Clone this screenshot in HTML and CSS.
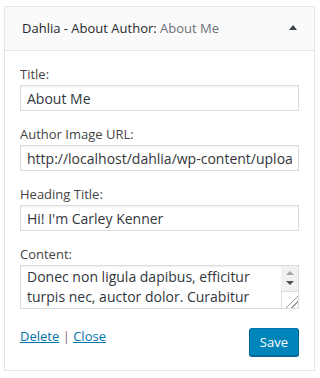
FILE: index.html
```html
<!DOCTYPE html>
<html lang="en">
<head>
    <meta charset="UTF-8">
    <meta name="viewport" content="width=device-width, initial-scale=1.0">
    <title>Widget - About Author</title>
    <link rel="stylesheet" href="styles.css">
</head>
<body>
    <!-- Widget box -->
    <div class="widget">
        <div class="widget-top">
            <h3 class="widget-title">Dahlia - About Author: <span class="in-title">About Me</span></h3>
            <span class="widget-toggle"></span>
        </div>

        <!-- Widget form -->
        <form class="widget-inside">
            <div class="field">
                <label for="title">Title:</label>
                <input id="title" type="text" value="About Me">
            </div>
            <div class="field">
                <label for="image">Author Image URL:</label>
                <input id="image" type="text" value="http://localhost/dahlia/wp-content/uploads/author.jpg">
            </div>
            <div class="field">
                <label for="heading">Heading Title:</label>
                <input id="heading" type="text" value="Hi! I'm Carley Kenner">
            </div>
            <div class="field">
                <label for="content">Content:</label>
                <div class="textarea-box">
                    <textarea id="content" rows="2">Donec non ligula dapibus, efficitur turpis nec, auctor dolor. Curabitur</textarea>
                    <div class="fake-scroll">
                        <span class="arrow up"></span>
                        <span class="arrow down"></span>
                        <span class="track"></span>
                        <span class="grip"></span>
                    </div>
                </div>
            </div>

            <div class="widget-actions">
                <div class="links">
                    <a href="#">Delete</a> | <a href="#">Close</a>
                </div>
                <button type="button" class="button-primary">Save</button>
            </div>
        </form>
    </div>
</body>
</html>
```

FILE: styles.css
```css
* {
    margin: 0;
    padding: 0;
    box-sizing: border-box;
}

body {
    padding: 6px 0 0 4px;
    background: #fff;
    font-family: 'Open Sans', 'Liberation Sans', sans-serif;
    font-size: 13px;
    color: #444;
}

.widget {
    width: 311px;
    border: 1px solid #e5e5e5;
    background: #fff;
    box-shadow: 0 1px 1px rgba(0, 0, 0, 0.04);
}

.widget-top {
    display: flex;
    justify-content: space-between;
    align-items: center;
    height: 44px;
    padding: 0 15px 2px 17px;
    background: #fafafa;
    border-bottom: 1px solid #e5e5e5;
}

.widget-title {
    font-size: 13px;
    font-weight: normal;
    color: #23282d;
}

.in-title {
    color: #6a7077;
}

.widget-toggle {
    width: 0;
    height: 0;
    margin-right: 2px;
    border-left: 4px solid transparent;
    border-right: 4px solid transparent;
    border-bottom: 5px solid #3c434a;
}

.widget-inside {
    padding: 13px 15px 14px;
}

.field {
    margin-bottom: 13px;
}

.field label {
    display: block;
    line-height: 20px;
    margin-bottom: 1px;
    color: #444;
}

.field input {
    display: block;
    width: 100%;
    height: 26px;
    padding: 0 6px;
    border: 1px solid #ddd;
    box-shadow: inset 0 1px 2px rgba(0, 0, 0, 0.07);
    font-family: inherit;
    font-size: 14px;
    color: #32373c;
    outline: none;
}

.textarea-box {
    display: flex;
    height: 44px;
    border: 1px solid #ddd;
    box-shadow: inset 0 1px 2px rgba(0, 0, 0, 0.07);
}

.textarea-box textarea {
    flex: 1;
    padding: 1px 6px;
    border: none;
    background: transparent;
    resize: none;
    overflow: hidden;
    font-family: inherit;
    font-size: 14px;
    line-height: 20px;
    color: #32373c;
    outline: none;
}

.fake-scroll {
    display: flex;
    flex-direction: column;
    align-items: center;
    width: 17px;
    background: #f1f1f1;
}

.arrow {
    width: 0;
    height: 0;
    border-left: 4px solid transparent;
    border-right: 4px solid transparent;
}

.arrow.up {
    margin-top: 5px;
    border-bottom: 4px solid #a3a3a3;
}

.arrow.down {
    margin-top: 6px;
    border-top: 4px solid #505050;
}

.track {
    flex: 1;
}

.grip {
    width: 17px;
    height: 17px;
    background: #fff linear-gradient(135deg, transparent 60%, #999 60%, #999 65%, transparent 65%, transparent 78%, #999 78%, #999 83%, transparent 83%);
    border-top: 1px solid #ddd;
    border-left: 1px solid #ddd;
}

.widget-actions {
    display: flex;
    justify-content: space-between;
    align-items: flex-start;
    margin-top: 17px;
}

.links {
    line-height: 20px;
    color: #8a6a7a;
}

.links a {
    color: #0073aa;
}

.button-primary {
    height: 28px;
    margin-top: 2px;
    padding: 0 10px 1px;
    background: #0085ba;
    border: 1px solid #0073aa;
    border-color: #0073aa #006799 #006799;
    border-radius: 3px;
    box-shadow: 0 1px 0 #006799;
    font-family: inherit;
    font-size: 13px;
    color: #fff;
    cursor: pointer;
}
```
